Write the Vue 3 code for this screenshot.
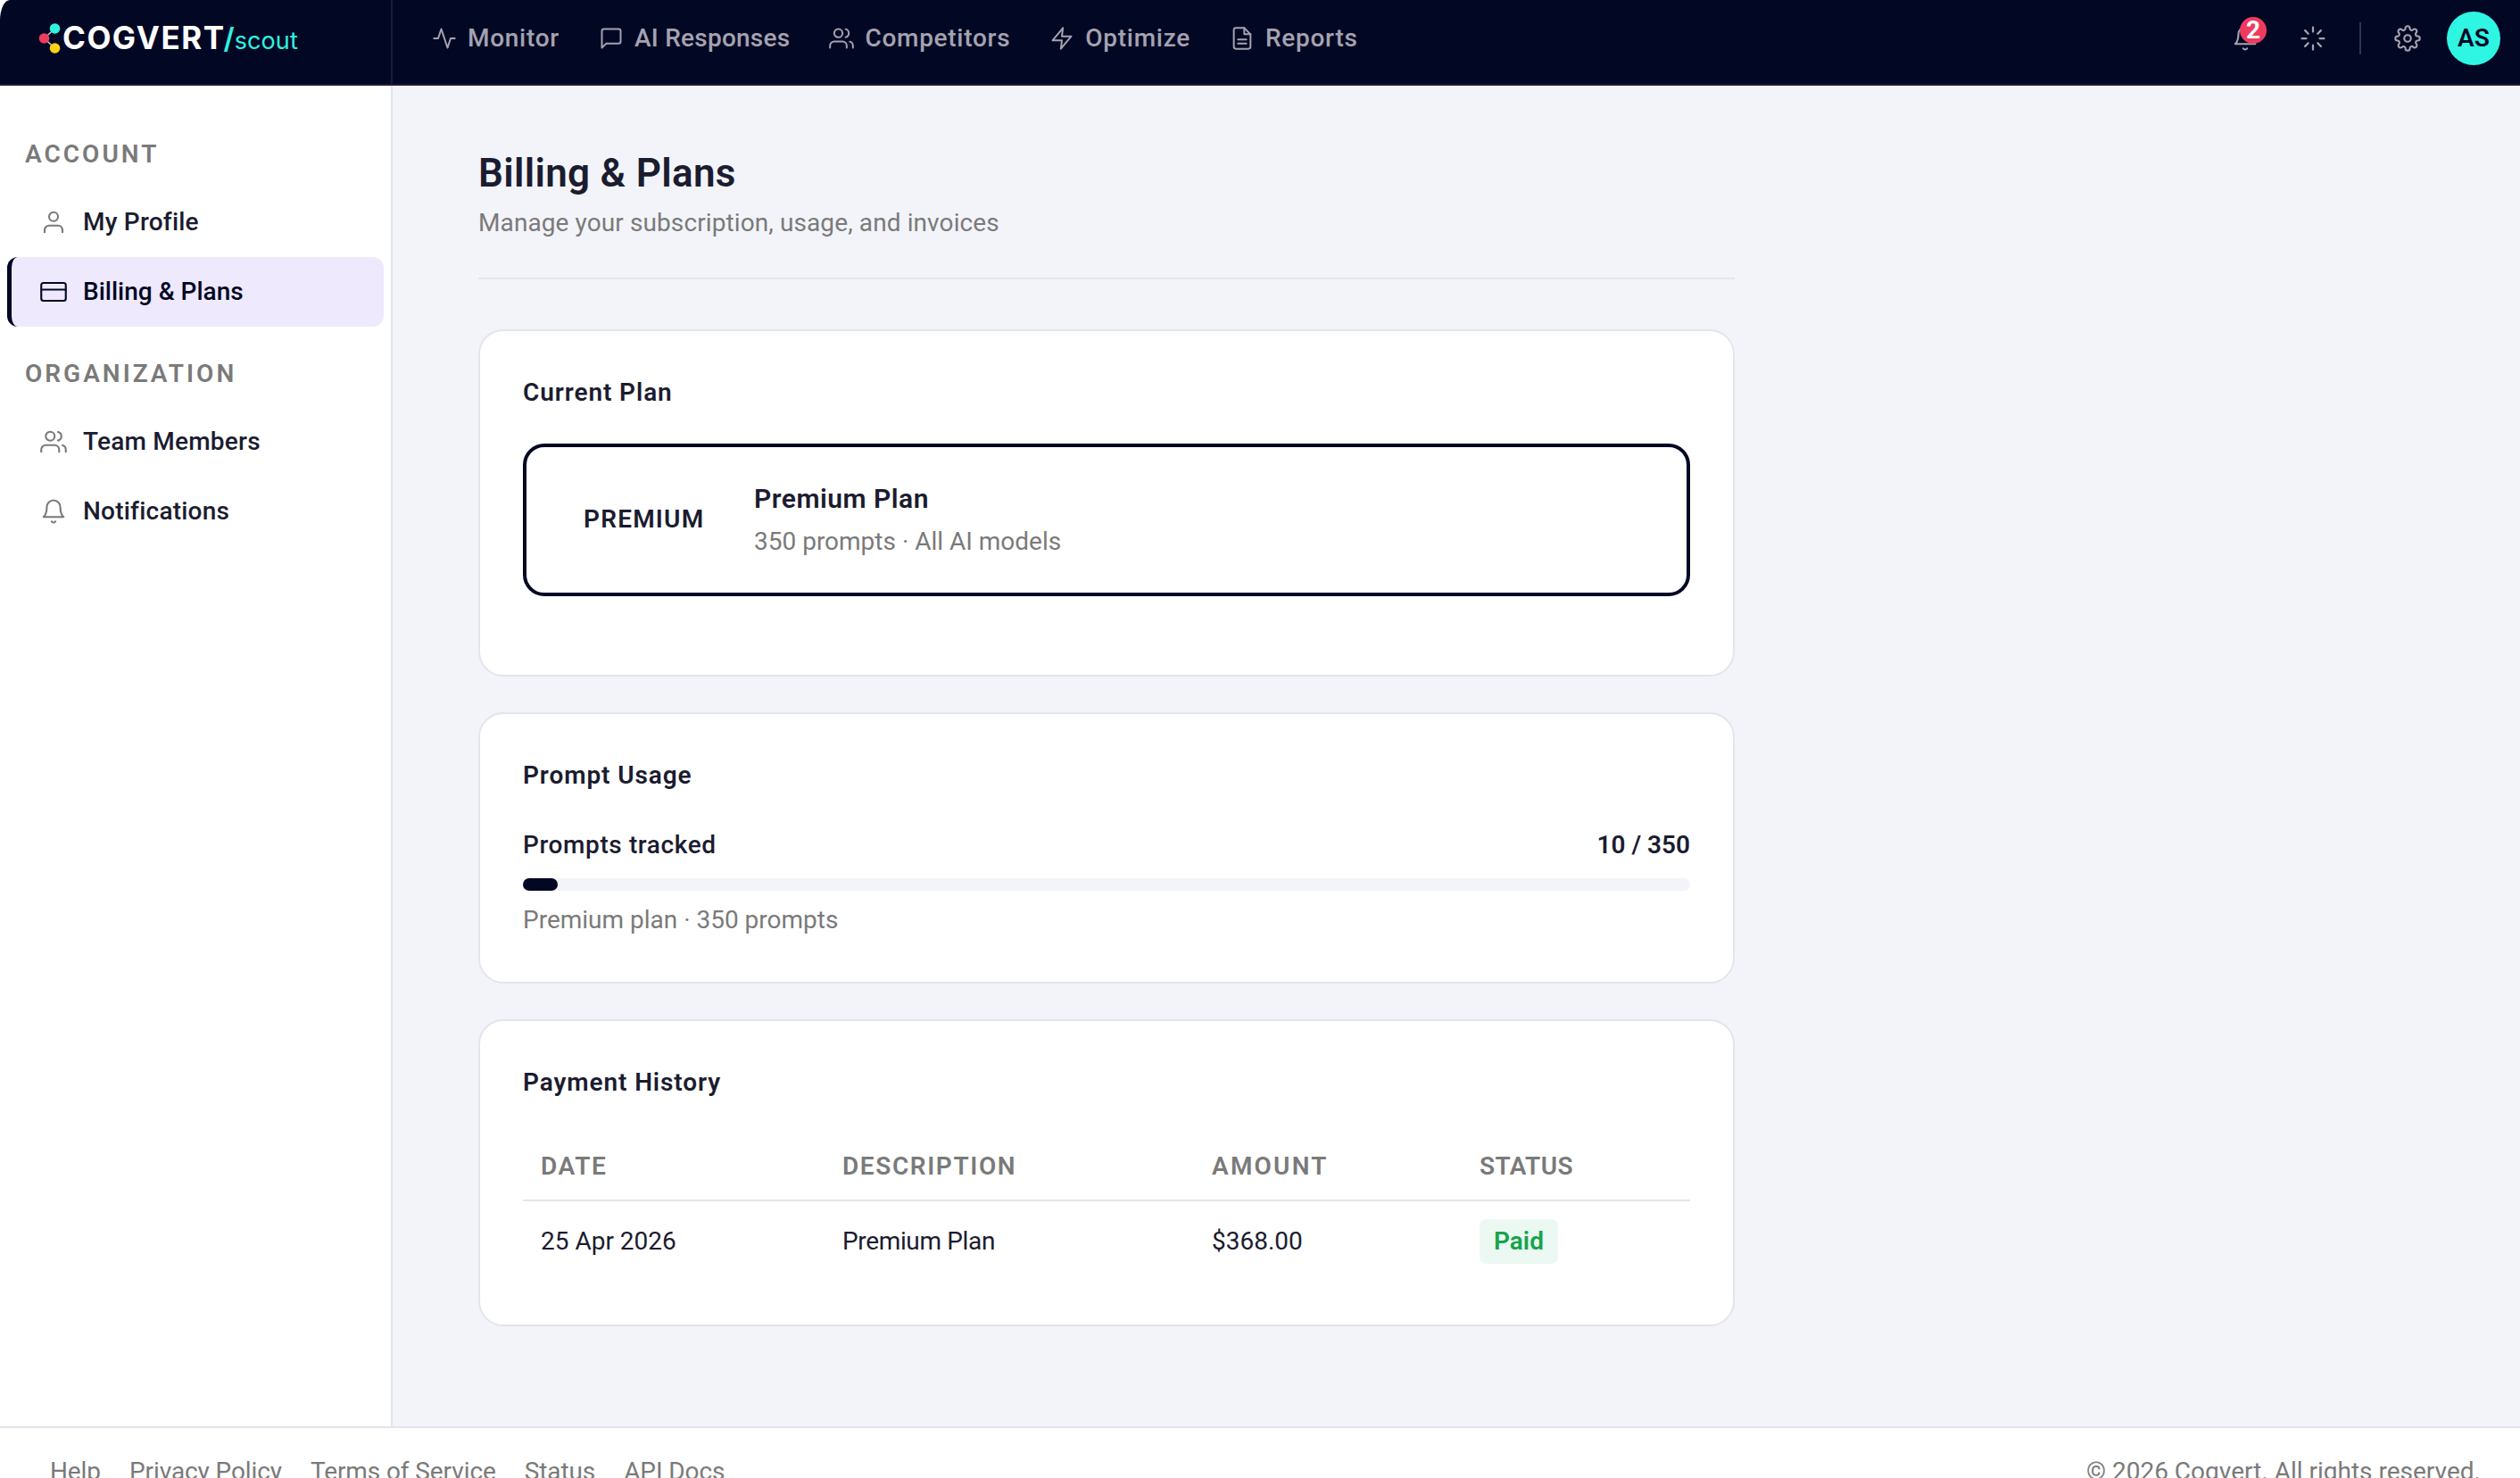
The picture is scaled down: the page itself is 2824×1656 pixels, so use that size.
<script setup>
import { ref, computed } from 'vue'

const navItems = [
    { label: 'Monitor', paths: ['M22 12h-4l-3 9L9 3l-3 9H2'] },
    { label: 'AI Responses', paths: ['M21 15a2 2 0 0 1-2 2H7l-4 4V5a2 2 0 0 1 2-2h14a2 2 0 0 1 2 2z'] },
    {
        label: 'Competitors',
        paths: ['M17 21v-2a4 4 0 0 0-4-4H5a4 4 0 0 0-4 4v2', 'M13 7a4 4 0 1 1-8 0a4 4 0 0 1 8 0z', 'M23 21v-2a4 4 0 0 0-3-3.87', 'M16 3.13a4 4 0 0 1 0 7.75']
    },
    { label: 'Optimize', paths: ['M13 2L3 14h9l-1 8 10-12h-9l1-8z'] },
    { label: 'Reports', paths: ['M14 2H6a2 2 0 0 0-2 2v16a2 2 0 0 0 2 2h12a2 2 0 0 0 2-2V8z', 'M14 2v6h6', 'M16 13H8', 'M16 17H8'] }
]

const bell = ['M18 8A6 6 0 0 0 6 8c0 7-3 9-3 9h18s-3-2-3-9', 'M13.73 21a2 2 0 0 1-3.46 0']

const sections = [
    {
        title: 'ACCOUNT',
        items: [
            { label: 'My Profile', paths: ['M20 21v-2a4 4 0 0 0-4-4H8a4 4 0 0 0-4 4v2', 'M16 7a4 4 0 1 1-8 0a4 4 0 0 1 8 0z'] },
            { label: 'Billing & Plans', paths: ['M3 4h18a2 2 0 0 1 2 2v12a2 2 0 0 1-2 2H3a2 2 0 0 1-2-2V6a2 2 0 0 1 2-2z', 'M1 10h22'] }
        ]
    },
    {
        title: 'ORGANIZATION',
        items: [
            { label: 'Team Members', paths: navItems[2].paths },
            { label: 'Notifications', paths: bell }
        ]
    }
]

const active = ref('Billing & Plans')
const used = ref(10)
const limit = ref(350)
const usagePercent = computed(() => Math.round((used.value / limit.value) * 100))

const payments = [{ date: '25 Apr 2026', description: 'Premium Plan', amount: '$368.00', status: 'Paid' }]

const footerLinks = ['Help', 'Privacy Policy', 'Terms of Service', 'Status', 'API Docs']
</script>

<template>
    <div class="app">
        <header class="topbar">
            <div class="brand">
                <svg class="brand-mark" viewBox="0 0 26 36" width="26" height="36">
                    <path d="M18.5 7L6.5 18l12 11" stroke="#d9dae0" stroke-width="1.3" fill="none" />
                    <circle cx="18.5" cy="7" r="5.8" fill="#2ff3e0" />
                    <circle cx="6.5" cy="18" r="5.8" fill="#ef3b5f" />
                    <circle cx="18.5" cy="29" r="5.8" fill="#fbd214" />
                </svg>
                <span class="brand-name">COGVERT</span>
                <span class="brand-slash">/</span>
                <span class="brand-sub">scout</span>
            </div>
            <nav class="nav">
                <a v-for="item in navItems" :key="item.label" class="nav-item">
                    <svg class="icon" viewBox="0 0 24 24" width="28" height="28">
                        <path v-for="d in item.paths" :key="d" :d="d" />
                    </svg>
                    <span>{{ item.label }}</span>
                </a>
            </nav>
            <div class="actions">
                <div class="bell">
                    <svg class="icon" viewBox="0 0 24 24" width="30" height="30">
                        <path v-for="d in bell" :key="d" :d="d" />
                    </svg>
                    <span class="bell-count">2</span>
                </div>
                <svg class="icon loader" viewBox="0 0 24 24" width="30" height="30">
                    <path d="M12 2v4M12 18v4M4.93 4.93l2.83 2.83M16.24 16.24l2.83 2.83M2 12h4M18 12h4M4.93 19.07l2.83-2.83M16.24 7.76l2.83-2.83" />
                </svg>
                <span class="divider"></span>
                <svg class="icon gear" viewBox="0 0 24 24" width="30" height="30">
                    <circle cx="12" cy="12" r="3" />
                    <path d="M19.4 15a1.65 1.65 0 0 0 .33 1.82l.06.06a2 2 0 0 1 0 2.83 2 2 0 0 1-2.83 0l-.06-.06a1.65 1.65 0 0 0-1.82-.33 1.65 1.65 0 0 0-1 1.51V21a2 2 0 0 1-2 2 2 2 0 0 1-2-2v-.09A1.65 1.65 0 0 0 9 19.4a1.65 1.65 0 0 0-1.82.33l-.06.06a2 2 0 0 1-2.83 0 2 2 0 0 1 0-2.83l.06-.06a1.65 1.65 0 0 0 .33-1.82 1.65 1.65 0 0 0-1.51-1H3a2 2 0 0 1-2-2 2 2 0 0 1 2-2h.09A1.65 1.65 0 0 0 4.6 9a1.65 1.65 0 0 0-.33-1.82l-.06-.06a2 2 0 0 1 0-2.83 2 2 0 0 1 2.83 0l.06.06a1.65 1.65 0 0 0 1.82.33H9a1.65 1.65 0 0 0 1-1.51V3a2 2 0 0 1 2-2 2 2 0 0 1 2 2v.09a1.65 1.65 0 0 0 1 1.51 1.65 1.65 0 0 0 1.82-.33l.06-.06a2 2 0 0 1 2.83 0 2 2 0 0 1 0 2.83l-.06.06a1.65 1.65 0 0 0-.33 1.82V9a1.65 1.65 0 0 0 1.51 1H21a2 2 0 0 1 2 2 2 2 0 0 1-2 2h-.09a1.65 1.65 0 0 0-1.51 1z" />
                </svg>
                <div class="avatar">AS</div>
            </div>
        </header>

        <div class="body">
            <aside class="sidebar">
                <div v-for="section in sections" :key="section.title" class="side-section">
                    <div class="side-title">{{ section.title }}</div>
                    <a
                        v-for="item in section.items"
                        :key="item.label"
                        class="side-item"
                        :class="{ active: item.label === active }"
                        @click="active = item.label"
                    >
                        <svg class="icon" viewBox="0 0 24 24" width="30" height="30">
                            <path v-for="d in item.paths" :key="d" :d="d" />
                        </svg>
                        <span>{{ item.label }}</span>
                    </a>
                </div>
            </aside>

            <main class="content">
                <div class="page-head">
                    <h1>Billing &amp; Plans</h1>
                    <p>Manage your subscription, usage, and invoices</p>
                </div>

                <section class="card plan-card">
                    <h2>Current Plan</h2>
                    <div class="plan">
                        <span class="plan-badge">PREMIUM</span>
                        <div>
                            <div class="plan-name">Premium Plan</div>
                            <div class="plan-desc">350 prompts · All AI models</div>
                        </div>
                    </div>
                </section>

                <section class="card usage-card">
                    <h2>Prompt Usage</h2>
                    <div class="usage-row">
                        <span class="usage-label">Prompts tracked</span>
                        <span class="usage-value">{{ used }} / {{ limit }}</span>
                    </div>
                    <div class="bar">
                        <div class="bar-fill" :style="{ width: usagePercent + '%' }"></div>
                    </div>
                    <div class="usage-note">Premium plan · {{ limit }} prompts</div>
                </section>

                <section class="card history-card">
                    <h2>Payment History</h2>
                    <table>
                        <thead>
                            <tr>
                                <th>DATE</th>
                                <th>DESCRIPTION</th>
                                <th>AMOUNT</th>
                                <th>STATUS</th>
                            </tr>
                        </thead>
                        <tbody>
                            <tr v-for="p in payments" :key="p.date">
                                <td>{{ p.date }}</td>
                                <td>{{ p.description }}</td>
                                <td>{{ p.amount }}</td>
                                <td><span class="status">{{ p.status }}</span></td>
                            </tr>
                        </tbody>
                    </table>
                </section>
            </main>
        </div>

        <footer class="footer">
            <div class="footer-links">
                <a v-for="link in footerLinks" :key="link">{{ link }}</a>
            </div>
            <span>© 2026 Cogvert. All rights reserved.</span>
        </footer>
    </div>
</template>

<style>
body {
    background: #fff;
    overflow: hidden;
}
</style>

<style scoped>
* {
    box-sizing: border-box;
}

.app {
    height: 1656px;
    display: flex;
    flex-direction: column;
    overflow: hidden;
    font-family: Roboto, "Liberation Sans", sans-serif;
    font-size: 28px;
    line-height: 34px;
    color: #1b1c30;
}

.icon {
    display: block;
    flex: none;
    fill: none;
    stroke: currentColor;
    stroke-width: 1.7;
    stroke-linecap: round;
    stroke-linejoin: round;
}

/* top bar */
.topbar {
    flex: none;
    height: 96px;
    display: flex;
    background: #020824;
    border-bottom: 2px solid #1d1a3a;
    border-top-left-radius: 11px 23px;
    color: #a5a2b0;
}

.brand {
    width: 440px;
    padding: 0 0 8px 43px;
    display: flex;
    align-items: center;
    border-right: 2px solid #1d1a3a;
    font-family: Inter, sans-serif;
}

.brand-name {
    margin-left: 1px;
    padding-bottom: 2px;
    font-size: 35px;
    font-weight: 700;
    letter-spacing: 1.5px;
    color: #fff;
}

.brand-slash {
    margin-left: -2px;
    font-size: 32px;
    font-weight: 600;
    color: #2ff3e0;
}

.brand-sub {
    font-size: 27px;
    letter-spacing: 0.1px;
    padding-top: 5px;
    color: #2ff3e0;
}

.nav {
    display: flex;
    gap: 44px;
    padding: 0 0 8px 44px;
}

.nav-item {
    display: flex;
    align-items: center;
    gap: 12px;
    font-weight: 500;
    letter-spacing: 0.72px;
}

.nav-item:nth-child(2) {
    letter-spacing: 0.25px;
}

.actions {
    margin-left: auto;
    display: flex;
    align-items: center;
    padding: 0 22px 8px 0;
}

.bell {
    position: relative;
    margin-right: 46px;
}

.bell-count {
    position: absolute;
    top: -9px;
    left: 9px;
    width: 30px;
    height: 30px;
    border-radius: 50%;
    background: #ef3b5f;
    color: #fff;
    font-weight: 700;
    line-height: 30px;
    text-align: center;
}

.loader {
    stroke-width: 1.8;
}

.divider {
    width: 2px;
    height: 36px;
    margin: 0 37px;
    background: #35324c;
}

.avatar {
    width: 60px;
    height: 60px;
    margin-left: 29px;
    border-radius: 50%;
    background: #2ff5e3;
    color: #020824;
    font-weight: 600;
    line-height: 59px;
    text-align: center;
}

/* sidebar */
.body {
    flex: none;
    height: 1502px;
    display: flex;
}

.sidebar {
    width: 440px;
    padding: 60px 8px 0;
    background: #fff;
    border-right: 2px solid #e4e4ec;
}

.side-section + .side-section {
    margin-top: 36px;
}

.side-title {
    padding-left: 20px;
    margin-bottom: 20px;
    font-weight: 600;
    letter-spacing: 3px;
    color: #7a7a7a;
}

.side-item {
    height: 78px;
    display: flex;
    align-items: center;
    gap: 18px;
    padding-left: 32px;
    border-left: 5px solid transparent;
    border-radius: 12px;
    font-weight: 500;
    letter-spacing: 0.22px;
    cursor: pointer;
}

.side-item .icon {
    color: #7a7a7a;
}

.side-item.active {
    background: #efe9fe;
    border-left-color: #020824;
    color: #020824;
    letter-spacing: 0;
}

.side-item.active .icon {
    color: #020824;
}

/* page */
.content {
    flex: 1;
    padding: 72px 0 0 96px;
    background: #f3f4f9;
}

.page-head {
    width: 1408px;
    padding-bottom: 44px;
    margin-bottom: 56px;
    border-bottom: 2px solid #e4e4ec;
}

h1 {
    margin: 0 0 13px;
    font-size: 44px;
    line-height: 52px;
    font-weight: 600;
    letter-spacing: 0.3px;
}

.page-head p {
    margin: 0;
    letter-spacing: 0.1px;
    color: #7a7a7a;
}

.card {
    width: 1408px;
    margin-bottom: 40px;
    padding: 52px 48px;
    background: #fff;
    border: 2px solid #e4e4ec;
    border-radius: 28px;
}

h2 {
    margin: 0 0 40px;
    font-size: 28px;
    line-height: 34px;
    font-weight: 600;
    letter-spacing: 0.9px;
}

.plan-card {
    padding-bottom: 88px;
}

.plan {
    height: 171px;
    display: flex;
    align-items: center;
    padding-left: 64px;
    border: 4px solid #020824;
    border-radius: 24px;
}

.plan-badge {
    width: 191px;
    padding-bottom: 2px;
    font-weight: 600;
    letter-spacing: 1.2px;
}

.plan-name {
    margin-bottom: 13px;
    font-size: 30px;
    line-height: 36px;
    font-weight: 600;
    letter-spacing: 0.5px;
}

.plan-desc {
    color: #7a7a7a;
}

.usage-card h2 {
    margin-bottom: 44px;
}

.usage-row {
    display: flex;
    justify-content: space-between;
    margin-bottom: 20px;
}

.usage-label {
    font-weight: 500;
    letter-spacing: 0.6px;
}

.usage-value {
    font-weight: 600;
}

.bar {
    height: 14px;
    margin-bottom: 16px;
    border-radius: 7px;
    background: #f3f4f9;
}

.bar-fill {
    height: 14px;
    border-radius: 7px;
    background: #020824;
}

.usage-note {
    color: #7a7a7a;
}

.history-card {
    padding-bottom: 48px;
}

table {
    width: 100%;
    table-layout: fixed;
    border-collapse: separate;
    border-spacing: 0;
}

th {
    padding: 20px;
    border-bottom: 2px solid #e4e4ec;
    font-weight: 600;
    letter-spacing: 1.6px;
    text-align: left;
    color: #7a7a7a;
}

th:nth-child(1) {
    width: 338px;
}

th:nth-child(2) {
    width: 414px;
}

th:nth-child(3) {
    width: 300px;
    letter-spacing: 2.2px;
}

th:nth-child(4) {
    letter-spacing: 0.4px;
}

td {
    height: 90px;
    padding: 0 20px;
}

td:nth-child(2) {
    letter-spacing: -0.35px;
}

.status {
    display: block;
    width: fit-content;
    padding: 8px 16px;
    border-radius: 8px;
    background: #ebf9f2;
    color: #14a44a;
    font-weight: 600;
}

.footer {
    flex: none;
    display: flex;
    justify-content: space-between;
    padding: 32px 44px 32px 56px;
    background: #fff;
    border-top: 2px solid #e4e4ec;
    color: #7a7a7a;
}

.footer-links {
    display: flex;
    gap: 32px;
    letter-spacing: -0.1px;
}
</style>
